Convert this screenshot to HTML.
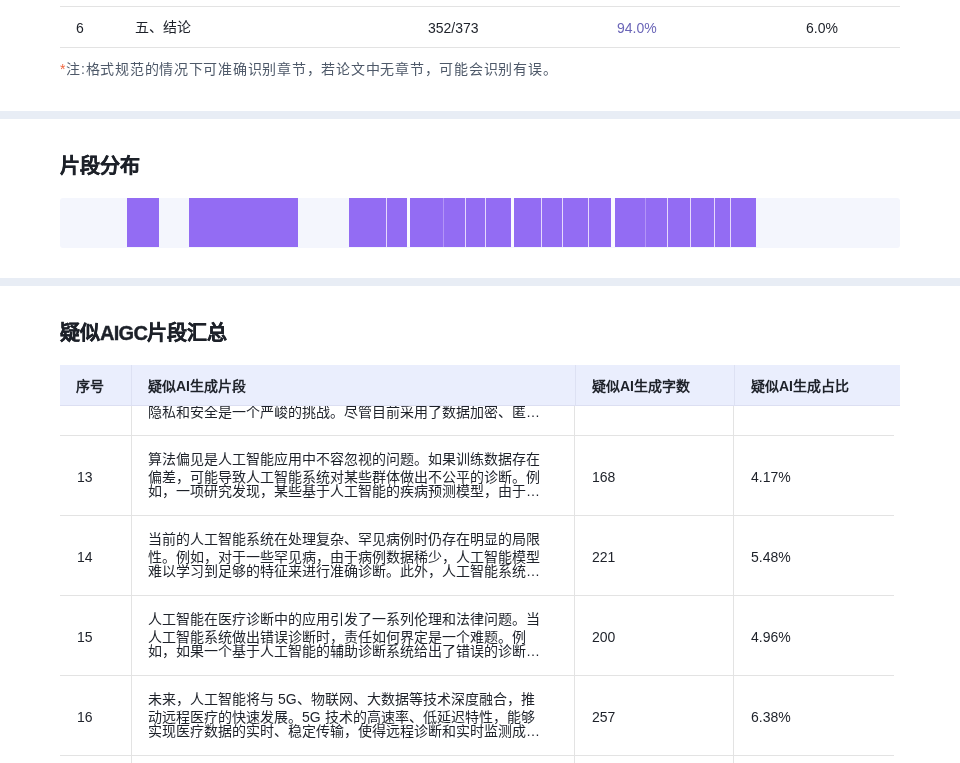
<!DOCTYPE html>
<html lang="zh-CN"><head><meta charset="utf-8">
<style>
*{margin:0;padding:0;box-sizing:border-box}
html,body{width:960px;height:763px;overflow:hidden;background:#fff}
body{position:relative;will-change:transform;font-family:"Liberation Sans",sans-serif;font-size:14px;color:#1d2129}
.a{position:absolute;white-space:nowrap}
.hl{position:absolute;height:1px;background:#e3e3e3}
.vl{position:absolute;width:1px;background:#e3e3e3}
.band{position:absolute;left:0;width:960px;height:8px;background:#e8edf5}
.t14{font-size:14px;line-height:16px}
.seg{position:absolute;top:198px;height:49px;background:#936cf3}
.sep{position:absolute;top:198px;height:49px;width:1px;background:#e6d9fc}
.gap{position:absolute;top:198px;height:49px;background:#fbfaff}
.hd{font-weight:bold}
.cell{position:absolute;font-size:14px;line-height:16px;white-space:nowrap}
</style></head><body>

<!-- top table remainder -->
<div class="hl" style="left:60px;top:6px;width:840px"></div>
<div class="hl" style="left:60px;top:47px;width:840px"></div>
<div class="a t14" style="left:76px;top:20px">6</div>
<div class="a t14" style="left:135px;top:19px">五、结论</div>
<div class="a t14" style="left:428px;top:20px">352/373</div>
<div class="a t14" style="left:617px;top:20px;color:#6b66b8">94.0%</div>
<div class="a t14" style="left:806px;top:20px">6.0%</div>
<div class="a t14" style="left:60px;top:61px;color:#4e5969;letter-spacing:0.74px"><span style="color:#f0643c">*</span>注:格式规范的情况下可准确识别章节，若论文中无章节，可能会识别有误。</div>

<div class="band" style="top:111px"></div>

<div class="a" style="left:60px;top:154px;font-size:20px;line-height:24px;font-weight:bold;-webkit-text-stroke:0.4px #1d2129">片段分布</div>

<div style="position:absolute;left:60px;top:198px;width:840px;height:50px;background:#f4f6fd;border-radius:3px"></div>

<div class="gap" style="left:407px;width:3px"></div>
<div class="gap" style="left:511px;width:3px"></div>
<div class="gap" style="left:611px;width:4px"></div>
<div class="seg" style="left:127px;width:32px"></div>
<div class="seg" style="left:189px;width:109px"></div>
<div class="seg" style="left:349px;width:58px"></div>
<div class="sep" style="left:386px"></div>
<div class="seg" style="left:410px;width:101px"></div>
<div class="sep" style="left:443px;background:#b394f7"></div>
<div class="sep" style="left:465px"></div>
<div class="sep" style="left:485px"></div>
<div class="seg" style="left:514px;width:97px"></div>
<div class="sep" style="left:541px"></div>
<div class="sep" style="left:562px"></div>
<div class="sep" style="left:588px"></div>
<div class="seg" style="left:615px;width:141px"></div>
<div class="sep" style="left:645px;background:#b394f7"></div>
<div class="sep" style="left:667px"></div>
<div class="sep" style="left:690px"></div>
<div class="sep" style="left:714px"></div>
<div class="sep" style="left:730px"></div>
<div class="band" style="top:278px"></div>

<div class="a" style="left:60px;top:321px;font-size:20px;line-height:24px;font-weight:bold;-webkit-text-stroke:0.4px #1d2129">疑似<span style="letter-spacing:-0.7px">AIGC</span>片段汇总</div>

<!-- table body -->
<div class="vl" style="left:131px;top:405px;height:358px"></div>
<div class="vl" style="left:574px;top:405px;height:358px"></div>
<div class="vl" style="left:733px;top:405px;height:358px"></div>
<div class="hl" style="left:60px;top:435px;width:834px"></div>
<div class="hl" style="left:60px;top:515px;width:834px"></div>
<div class="hl" style="left:60px;top:595px;width:834px"></div>
<div class="hl" style="left:60px;top:675px;width:834px"></div>
<div class="hl" style="left:60px;top:755px;width:834px"></div>
<div class="cell" style="left:148px;top:404px">隐私和安全是一个严峻的挑战。尽管目前采用了数据加密、匿…</div>
<div class="cell" style="left:77px;top:469px">13</div>
<div class="cell" style="left:148px;top:451px">算法偏见是人工智能应用中不容忽视的问题。如果训练数据存在</div>
<div class="cell" style="left:148px;top:469px">偏差，可能导致人工智能系统对某些群体做出不公平的诊断。例</div>
<div class="cell" style="left:148px;top:483px">如，一项研究发现，某些基于人工智能的疾病预测模型，由于…</div>
<div class="cell" style="left:592px;top:469px">168</div>
<div class="cell" style="left:751px;top:469px">4.17%</div>
<div class="cell" style="left:77px;top:549px">14</div>
<div class="cell" style="left:148px;top:531px">当前的人工智能系统在处理复杂、罕见病例时仍存在明显的局限</div>
<div class="cell" style="left:148px;top:549px">性。例如，对于一些罕见病，由于病例数据稀少，人工智能模型</div>
<div class="cell" style="left:148px;top:563px">难以学习到足够的特征来进行准确诊断。此外，人工智能系统…</div>
<div class="cell" style="left:592px;top:549px">221</div>
<div class="cell" style="left:751px;top:549px">5.48%</div>
<div class="cell" style="left:77px;top:629px">15</div>
<div class="cell" style="left:148px;top:611px">人工智能在医疗诊断中的应用引发了一系列伦理和法律问题。当</div>
<div class="cell" style="left:148px;top:629px">人工智能系统做出错误诊断时，责任如何界定是一个难题。例</div>
<div class="cell" style="left:148px;top:643px">如，如果一个基于人工智能的辅助诊断系统给出了错误的诊断…</div>
<div class="cell" style="left:592px;top:629px">200</div>
<div class="cell" style="left:751px;top:629px">4.96%</div>
<div class="cell" style="left:77px;top:709px">16</div>
<div class="cell" style="left:148px;top:691px">未来，人工智能将与 5G、物联网、大数据等技术深度融合，推</div>
<div class="cell" style="left:148px;top:709px">动远程医疗的快速发展。5G 技术的高速率、低延迟特性，能够</div>
<div class="cell" style="left:148px;top:723px">实现医疗数据的实时、稳定传输，使得远程诊断和实时监测成…</div>
<div class="cell" style="left:592px;top:709px">257</div>
<div class="cell" style="left:751px;top:709px">6.38%</div>
<!-- table header -->
<div style="position:absolute;left:60px;top:365px;width:840px;height:40px;background:#eaeefd"></div>
<div style="position:absolute;left:60px;top:405px;width:840px;height:1px;background:#dcdff2"></div>
<div class="vl" style="left:131px;top:365px;height:40px;background:#dde1f3"></div>
<div class="vl" style="left:575px;top:365px;height:40px;background:#dde1f3"></div>
<div class="vl" style="left:734px;top:365px;height:40px;background:#dde1f3"></div>
<div class="cell hd" style="left:76px;top:378px">序号</div>
<div class="cell hd" style="left:148px;top:378px">疑似AI生成片段</div>
<div class="cell hd" style="left:592px;top:378px">疑似AI生成字数</div>
<div class="cell hd" style="left:751px;top:378px">疑似AI生成占比</div>
</body></html>
